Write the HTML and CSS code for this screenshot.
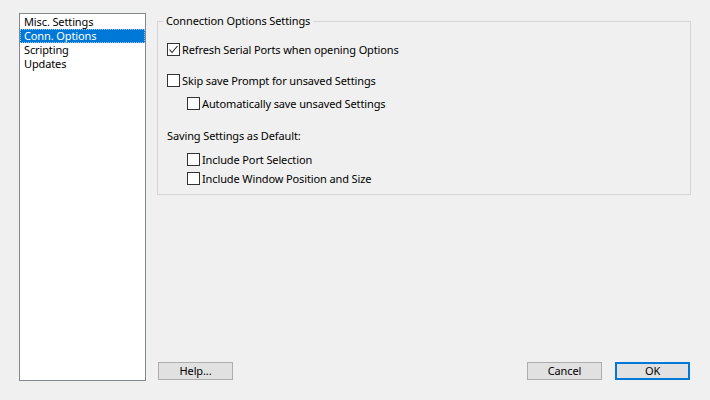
FILE: index.html
```html
<!DOCTYPE html>
<html>
<head>
<meta charset="utf-8">
<link rel="stylesheet" href="styles.css">
</head>
<body>
<div class="dialog">
  <ul class="listbox">
    <li class="item">Misc. Settings</li>
    <li class="item selected">Conn. Options</li>
    <li class="item">Scripting</li>
    <li class="item">Updates</li>
  </ul>
  <div class="main">
    <fieldset class="group">
      <legend class="group-title">Connection Options Settings</legend>
      <div class="row row-1">
        <span class="cb"><svg width="11" height="11" viewBox="0 0 11 11"><path d="M1.5 5.5 L4 8.5 L9.5 2" fill="none" stroke="#222" stroke-width="1.1"/></svg></span>
        <span class="label">Refresh Serial Ports when opening Options</span>
      </div>
      <div class="row row-2">
        <span class="cb"></span>
        <span class="label">Skip save Prompt for unsaved Settings</span>
      </div>
      <div class="row row-3 indent">
        <span class="cb"></span>
        <span class="label">Automatically save unsaved Settings</span>
      </div>
      <div class="row row-4">
        <span class="label plain">Saving Settings as Default:</span>
      </div>
      <div class="row row-5 indent">
        <span class="cb"></span>
        <span class="label">Include Port Selection</span>
      </div>
      <div class="row row-6 indent">
        <span class="cb"></span>
        <span class="label">Include Window Position and Size</span>
      </div>
    </fieldset>
    <div class="spacer"></div>
    <div class="buttons">
      <button class="btn">Help...</button>
      <div class="btn-gap"></div>
      <button class="btn">Cancel</button>
      <button class="btn default">OK</button>
    </div>
  </div>
</div>
</body>
</html>
```
FILE: styles.css
```css
html, body {
  margin: 0;
  padding: 0;
  background: #f0f0f0;
}
body {
  width: 710px;
  height: 400px;
  overflow: hidden;
  font-family: "Noto Sans", "Open Sans", sans-serif;
  font-size: 11px;
  letter-spacing: -0.12px;
  color: #000;
}
.dialog {
  display: flex;
  box-sizing: border-box;
  height: 400px;
  padding: 13px 19px 19px 19px;
  gap: 11px;
}
.listbox {
  box-sizing: border-box;
  width: 127px;
  height: 368px;
  margin: 0;
  padding: 1px 0 0 0;
  list-style: none;
  background: #fff;
  border: 1px solid #828790;
}
.item {
  box-sizing: border-box;
  height: 14px;
  line-height: 14px;
  padding-left: 4px;
  white-space: nowrap;
  overflow: hidden;
}
.item.selected {
  background: #0078d7;
  color: #fff;
  outline: 1px dotted #9cc3e8;
  outline-offset: -1px;
}
.main {
  width: 534px;
  display: flex;
  flex-direction: column;
}
.group {
  margin: 0;
  padding: 12px 0 7px 0;
  border: 1px solid #d5d5d5;
  min-width: 0;
}
.group-title {
  margin-left: 5px;
  padding: 0 3px;
  line-height: 16px;
  height: 16px;
}
.row {
  display: flex;
  align-items: center;
  height: 17px;
  padding-left: 9px;
}
.row.indent {
  padding-left: 29px;
}
.row-2 { margin-top: 14px; }
.row-3 { margin-top: 6px; }
.row-4 { margin-top: 15px; }
.row-5 { margin-top: 7px; }
.row-6 { margin-top: 2px; }
.cb {
  box-sizing: border-box;
  width: 13px;
  height: 13px;
  border: 1px solid #333;
  background: #fff;
  display: flex;
  align-items: center;
  justify-content: center;
  flex: none;
}
.cb svg { display: block; }
.label {
  margin-left: 2px;
  white-space: nowrap;
}
.label.plain {
  margin-left: 0;
}
.spacer {
  flex: 1;
}
.buttons {
  display: flex;
  padding-left: 1px;
  margin-bottom: 1px;
}
.btn-gap { flex: 1; }
.btn {
  box-sizing: border-box;
  width: 75px;
  height: 18px;
  margin: 0;
  padding: 0;
  font-family: inherit;
  font-size: 11px;
  letter-spacing: -0.12px;
  line-height: 14px;
  color: #000;
  background: #e1e1e1;
  border: 1px solid #adadad;
  border-radius: 0;
}
.btn.default {
  border: 2px solid #0078d7;
  margin-left: 13px;
  margin-right: 1px;
}
```
